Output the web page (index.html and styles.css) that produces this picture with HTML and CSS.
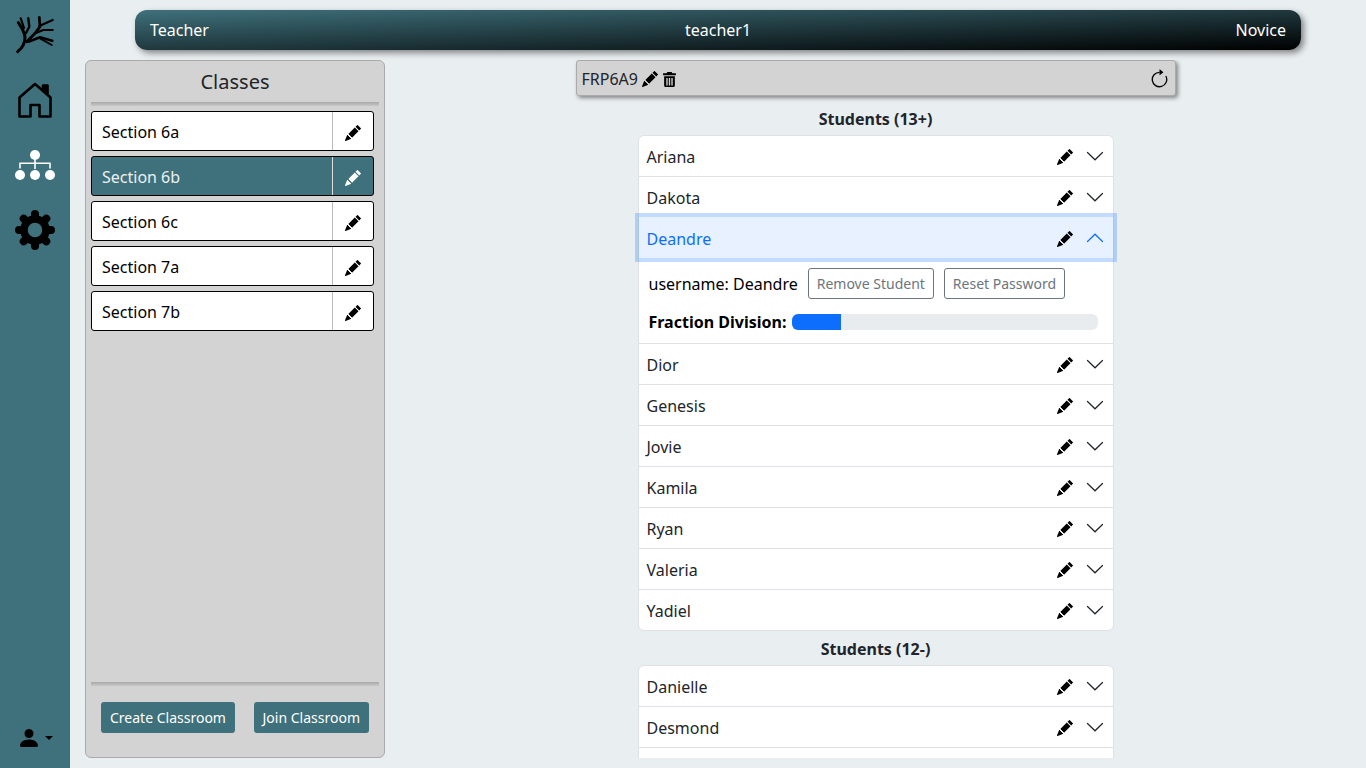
FILE: index.html
```html
<!DOCTYPE html>
<html lang="en">
<head>
  <meta charset="UTF-8">
  <meta name="viewport" content="width=device-width, initial-scale=1.0">
  <title>Classes</title>
  <link rel="stylesheet" href="styles.css">
</head>
<body>
  <svg class="sprite" aria-hidden="true">
    <symbol id="pencil" viewBox="0 0 16 16">
      <path d="M12.854.146a.5.5 0 0 0-.707 0L10.5 1.793 14.207 5.5l1.647-1.646a.5.5 0 0 0 0-.708l-3-3zm.646 6.061L9.793 2.5 3.293 9H3.5a.5.5 0 0 1 .5.5v.5h.5a.5.5 0 0 1 .5.5v.5h.5a.5.5 0 0 1 .5.5v.5h.5a.5.5 0 0 1 .5.5v.207l6.5-6.5zm-7.468 7.468A.5.5 0 0 1 6 13.5V13h-.5a.5.5 0 0 1-.5-.5V12h-.5a.5.5 0 0 1-.5-.5V11h-.5a.5.5 0 0 1-.5-.5V10h-.5a.499.499 0 0 1-.175-.032l-.179.178a.5.5 0 0 0-.11.168l-2 5a.5.5 0 0 0 .65.65l5-2a.5.5 0 0 0 .168-.11l.178-.178z"/>
    </symbol>
    <symbol id="chevron" viewBox="0 0 20 20">
      <path d="M2.500 6.500L10 13.800l7.500-7.300" fill="none" stroke-linecap="round"/>
    </symbol>
  </svg>

  <nav class="sidebar">
    <svg class="logo" viewBox="15 14 40 40" fill="none" stroke="#000" stroke-width="2.4" stroke-linecap="round" stroke-linejoin="round">
      <path stroke-width="3" d="M17.700 51.700C22 48 25 43 25 38c0-5-3-10-6.700-15.300"/>
      <path stroke-width="2.200" d="M24 28l-3.300-9.700"/>
      <path d="M26 33l3.300-6.300-1-8.400"/>
      <path stroke-width="2.800" d="M26.700 41.700l8.300-8.400 5-6.600-.7-9.400"/>
      <path stroke-width="2.200" d="M39.300 26l13.400-6"/>
      <path stroke-width="2.200" d="M35 33.300L43.300 30h9.400"/>
      <path stroke-width="2.600" d="M28.300 41.700L40 37.300l12.300 3.400"/>
      <path stroke-width="2" d="M40 38.300L51.700 45"/>
    </svg>
    <svg class="home" viewBox="0 0 34 36" fill="none" stroke="#000" stroke-width="2.600" stroke-linejoin="round">
      <path d="M1.500 34.500V15.500L17 2l15.500 13.500v19H21.500V23h-9v11.500z"/>
      <path d="M25 8V3.500h4.500v9" fill="#000"/>
    </svg>
    <svg class="org" viewBox="0 0 40 30">
      <circle cx="20" cy="5" r="5" fill="#fff"/>
      <path d="M5 18.500v-5.200h30v5.200M20 9v10" fill="none" stroke="#fff" stroke-width="1.600"/>
      <circle cx="5" cy="25" r="5" fill="#fff"/>
      <circle cx="20" cy="25" r="5" fill="#fff"/>
      <circle cx="35" cy="25" r="5" fill="#fff"/>
    </svg>
    <svg class="gear" viewBox="0 0 40 40" fill="none" stroke="#000">
      <circle cx="20" cy="20" r="11" stroke-width="7.500"/>
      <path stroke-width="8" stroke-linecap="round" d="M20 4v4M20 32v4M4 20h4M32 20h4M8.700 8.700l2.800 2.800M28.500 28.500l2.800 2.800M31.300 8.700l-2.800 2.800M11.500 28.500l-2.800 2.800"/>
    </svg>
    <div class="user-menu">
      <svg class="user-icon" viewBox="2 2 12 12"><path d="M3 14s-1 0-1-1 1-4 6-4 6 3 6 4-1 1-1 1H3zm5-6a3 3 0 1 0 0-6 3 3 0 0 0 0 6z"/></svg>
      <span class="caret"></span>
    </div>
  </nav>

  <div class="page">
    <header class="topbar">
      <span>Teacher</span>
      <span>teacher1</span>
      <span class="level">Novice</span>
    </header>

    <div class="content">
      <aside class="classes">
        <h2>Classes</h2>
        <hr class="rule">
        <ul class="class-list">
          <li class="class-item"><span>Section 6a</span><button class="class-edit"><svg class="icon"><use href="#pencil"/></svg></button></li>
          <li class="class-item active"><span>Section 6b</span><button class="class-edit"><svg class="icon"><use href="#pencil"/></svg></button></li>
          <li class="class-item"><span>Section 6c</span><button class="class-edit"><svg class="icon"><use href="#pencil"/></svg></button></li>
          <li class="class-item"><span>Section 7a</span><button class="class-edit"><svg class="icon"><use href="#pencil"/></svg></button></li>
          <li class="class-item"><span>Section 7b</span><button class="class-edit"><svg class="icon"><use href="#pencil"/></svg></button></li>
        </ul>
        <hr class="rule">
        <div class="class-actions">
          <button class="btn-teal">Create Classroom</button>
          <button class="btn-teal">Join Classroom</button>
        </div>
      </aside>

      <main class="roster">
        <div class="code-bar">
          <span>FRP6A9</span>
          <svg class="icon"><use href="#pencil"/></svg>
          <svg class="trash" viewBox="0 0 12 14">
            <path d="M4 0h4l.7 1.200H12v1.800H0V1.200h3.300zM1 4h10v8.500c0 .8-.7 1.500-1.500 1.500h-7C1.700 14 1 13.300 1 12.500zm2 1.500v7h1.300v-7zm2.350 0v7h1.300v-7zm2.350 0v7H9v-7z" fill-rule="evenodd"/>
          </svg>
          <svg class="refresh" viewBox="0 0 16 16">
            <path d="M8 3a5 5 0 1 0 4.546 2.914.5.5 0 0 1 .908-.417A6 6 0 1 1 8 2v1z"/>
            <path d="M8 4.466V.534a.25.25 0 0 1 .41-.192l2.360 1.966c.12.1.12.284 0 .384L8.410 4.658A.25.25 0 0 1 8 4.466z"/>
          </svg>
        </div>

        <h3>Students (13+)</h3>
        <div class="accordion">
          <div class="row"><span>Ariana</span><svg class="icon"><use href="#pencil"/></svg><svg class="chev"><use href="#chevron"/></svg></div>
          <div class="row"><span>Dakota</span><svg class="icon"><use href="#pencil"/></svg><svg class="chev"><use href="#chevron"/></svg></div>
          <div class="row open"><span>Deandre</span><svg class="icon"><use href="#pencil"/></svg><svg class="chev"><use href="#chevron"/></svg></div>
          <div class="row-body">
            <div class="body-line">
              <span>username: Deandre</span>
              <button class="btn-outline">Remove Student</button>
              <button class="btn-outline">Reset Password</button>
            </div>
            <div class="body-line progress-line">
              <b>Fraction Division:</b>
              <div class="progress"><div class="progress-bar" style="width: 16%"></div></div>
            </div>
          </div>
          <div class="row"><span>Dior</span><svg class="icon"><use href="#pencil"/></svg><svg class="chev"><use href="#chevron"/></svg></div>
          <div class="row"><span>Genesis</span><svg class="icon"><use href="#pencil"/></svg><svg class="chev"><use href="#chevron"/></svg></div>
          <div class="row"><span>Jovie</span><svg class="icon"><use href="#pencil"/></svg><svg class="chev"><use href="#chevron"/></svg></div>
          <div class="row"><span>Kamila</span><svg class="icon"><use href="#pencil"/></svg><svg class="chev"><use href="#chevron"/></svg></div>
          <div class="row"><span>Ryan</span><svg class="icon"><use href="#pencil"/></svg><svg class="chev"><use href="#chevron"/></svg></div>
          <div class="row"><span>Valeria</span><svg class="icon"><use href="#pencil"/></svg><svg class="chev"><use href="#chevron"/></svg></div>
          <div class="row"><span>Yadiel</span><svg class="icon"><use href="#pencil"/></svg><svg class="chev"><use href="#chevron"/></svg></div>
        </div>

        <h3>Students (12-)</h3>
        <div class="accordion">
          <div class="row"><span>Danielle</span><svg class="icon"><use href="#pencil"/></svg><svg class="chev"><use href="#chevron"/></svg></div>
          <div class="row"><span>Desmond</span><svg class="icon"><use href="#pencil"/></svg><svg class="chev"><use href="#chevron"/></svg></div>
          <div class="row"></div>
        </div>
      </main>
    </div>
  </div>
</body>
</html>
```

FILE: styles.css
```css
* {
  box-sizing: border-box;
}
body {
  font-family: "Noto Sans", sans-serif;
  font-size: 16px;
  line-height: 24px;
  margin: 0;
  height: 100vh;
  overflow: hidden;
  display: flex;
  background: #e9eef1;
  color: #212529;
}
button {
  font-family: inherit;
}
.sprite {
  display: none;
}
.icon {
  width: 16px;
  height: 16px;
  flex-shrink: 0;
}

/* left nav */
.sidebar {
  width: 70px;
  flex-shrink: 0;
  background: #3f717c;
  display: flex;
  flex-direction: column;
  align-items: center;
  padding-top: 14px;
}
.logo {
  width: 40px;
  height: 40px;
}
.home {
  width: 34px;
  height: 36px;
  margin-top: 28px;
}
.org {
  width: 40px;
  height: 30px;
  margin-top: 32px;
}
.gear {
  width: 40px;
  height: 40px;
  margin-top: 30px;
}
.user-menu {
  margin-top: auto;
  margin-bottom: 21px;
  margin-left: 2px;
  display: flex;
  align-items: center;
  gap: 7px;
}
.user-icon {
  width: 18px;
  height: 18px;
}
.caret {
  width: 0;
  height: 0;
  border-top: 4px solid #000;
  border-left: 4px solid transparent;
  border-right: 4px solid transparent;
}

.page {
  flex: 1;
  min-width: 0;
  height: 100vh;
  display: flex;
  flex-direction: column;
  padding-bottom: 10px;
}
.topbar {
  height: 40px;
  margin: 10px 65px 10px 65px;
  padding: 0 15px;
  flex-shrink: 0;
  display: grid;
  grid-template-columns: 1fr auto 1fr;
  align-items: center;
  border-radius: 12px;
  background: linear-gradient(to bottom right, #3f717c, #000);
  box-shadow: 3px 3px 6px rgba(0, 0, 0, 0.45);
  color: #fff;
}
.level {
  text-align: right;
}
.content {
  flex: 1;
  min-height: 0;
  display: flex;
  padding-left: 15px;
}

/* classes panel */
.classes {
  width: 300px;
  flex-shrink: 0;
  display: flex;
  flex-direction: column;
  padding: 0 5px;
  background: #d3d3d3;
  border: 1px solid #aaa;
  border-radius: 6px;
}
.classes h2 {
  font-size: 20px;
  font-weight: 400;
  line-height: 28px;
  text-align: center;
  margin: 7px 0 6px;
}
.rule {
  width: 100%;
  height: 4px;
  margin: 0;
  border: none;
  background: linear-gradient(to bottom, #a8a8a8, #c8c8c8);
  flex-shrink: 0;
}
.class-list {
  list-style: none;
  margin: 5px 0 0;
  padding: 0;
  flex: 1;
  width: 283px;
}
.class-item {
  height: 40px;
  margin-bottom: 5px;
  display: flex;
  align-items: center;
  justify-content: space-between;
  padding: 2px 0 0 10px;
  background: #fff;
  border: 1px solid #000;
  border-radius: 3px;
  color: #000;
}
.class-item.active {
  background: #3f717c;
  color: #ecf0f1;
}
.class-edit {
  width: 41px;
  height: 38px;
  margin-top: -2px;
  display: flex;
  align-items: center;
  justify-content: center;
  padding: 4px 0 0;
  background: none;
  border: none;
  border-left: 1px solid #bbb;
  color: #000;
}
.class-item .icon {
  fill: currentColor;
}
.class-item.active .class-edit {
  color: #fff;
  border-left-color: #ddd;
}
.class-actions {
  display: flex;
  justify-content: space-between;
  padding: 16px 10px 24px;
}
.btn-teal {
  height: 31px;
  padding: 0 9px;
  font-size: 14px;
  color: #fff;
  background: #3f717c;
  border: none;
  border-radius: 3px;
}

/* student lists */
.roster {
  flex: 1;
  min-width: 0;
  display: flex;
  flex-direction: column;
  align-items: center;
  overflow: hidden;
}
.code-bar {
  width: 600px;
  height: 36px;
  flex-shrink: 0;
  display: flex;
  align-items: center;
  gap: 4px;
  padding: 2px 5px 0 5px;
  background: #d3d3d3;
  border: 1px solid #aaa;
  border-radius: 3px;
  box-shadow: 2px 2px 4px rgba(0, 0, 0, 0.45);
  margin-bottom: 5px;
}
.trash {
  width: 13px;
  height: 15px;
  margin-left: 1px;
}
.refresh {
  width: 21px;
  height: 21px;
  margin-left: auto;
}
.roster h3 {
  font-size: 16px;
  font-weight: 700;
  line-height: 24px;
  text-align: center;
  margin: 6px 0 4px;
  flex-shrink: 0;
}
.accordion {
  width: 476px;
  flex-shrink: 0;
  background: #fff;
  border: 1px solid #dee2e6;
  border-radius: 6px;
}
.row {
  height: 41px;
  display: flex;
  align-items: center;
  gap: 12px;
  padding: 2px 8px 0 8px;
  border-top: 1px solid #dee2e6;
}
.row:first-child {
  height: 40px;
  border-top: none;
}
.row span {
  flex: 1;
}
.chev {
  width: 20px;
  height: 20px;
  margin-top: -2px;
  stroke: #212529;
  stroke-width: 1.200;
}
.row.open {
  position: relative;
  background: #e7f1ff;
  color: #0d6efd;
  border-top: none;
  box-shadow: 0 0 0 4px rgba(13, 110, 253, 0.25);
}
.row.open .chev {
  transform: rotate(180deg);
  stroke: #0d6efd;
}
.row-body {
  height: 85px;
  padding: 10px 15px 0 10px;
  color: #000;
}
.body-line {
  display: flex;
  align-items: center;
  gap: 10px;
  height: 31px;
}
.btn-outline {
  height: 31px;
  padding: 0 8px;
  font-size: 14px;
  color: #6c757d;
  background: none;
  border: 1px solid #6c757d;
  border-radius: 3px;
}
.progress-line {
  margin-top: 7px;
  height: 32px;
  gap: 6px;
}
.progress {
  flex: 1;
  height: 16px;
  background: #e9ecef;
  border-radius: 6px;
  overflow: hidden;
}
.progress-bar {
  height: 100%;
  background: #0d6efd;
}
```
